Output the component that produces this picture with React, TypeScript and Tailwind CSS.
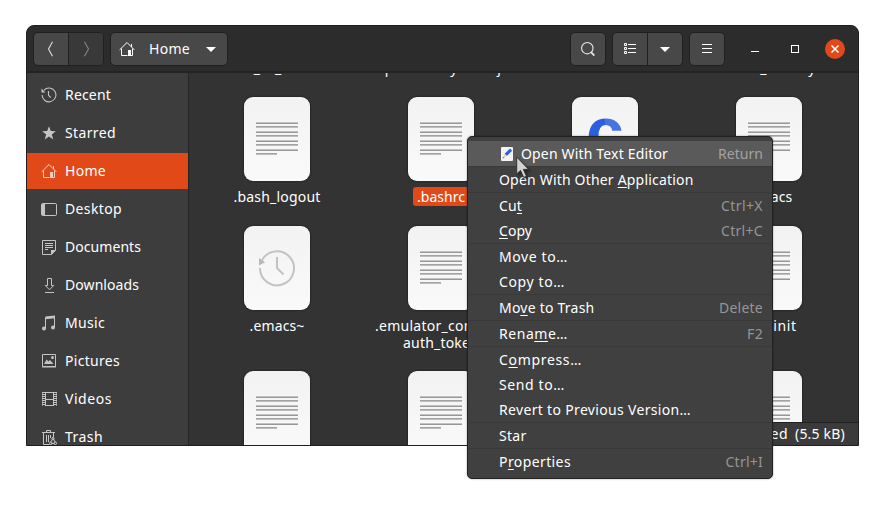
import { useLayoutEffect, useRef, useState, type ReactNode } from "react";

/** Text tracked so that it fills the given advance width. */
function Fit({ w, children, className = "" }: { w: number; children: ReactNode; className?: string }) {
  const ref = useRef<HTMLSpanElement>(null);
  const [spacing, setSpacing] = useState(0);
  useLayoutEffect(() => {
    const el = ref.current;
    if (!el) return;
    el.style.letterSpacing = "0px";
    const natural = el.getBoundingClientRect().width;
    const count = (el.textContent ?? "").length;
    const next = (w - natural) / Math.max(count, 1);
    el.style.letterSpacing = `${next}px`;
    setSpacing(next);
  }, [w]);
  return (
    <span ref={ref} className={`inline-block whitespace-pre ${className}`} style={{ letterSpacing: spacing }}>
      {children}
    </span>
  );
}

function HomeIcon() {
  return (
    <svg width="16" height="16" viewBox="0 0 16 16" fill="none" stroke="currentColor" strokeWidth="1">
      <path d="M.6 8.9 8 1.5l7.4 7.4M2.5 7.5v7h6M13.5 7.5v7h-1.5" />
      <path d="M12.5 3v3" />
      <path d="M9 9h3v6H9z" fill="currentColor" stroke="none" />
    </svg>
  );
}

function RecentIcon() {
  return (
    <svg width="16" height="16" viewBox="0 0 16 16" fill="none" stroke="currentColor" strokeWidth="1.1">
      <path d="M2.9 3.3A6.9 6.9 0 1 1 1.1 8" />
      <path d="M7.5 4v4.3l2.2 2.2" />
      <path d="M.5 1.6v3.8h3.8z" fill="currentColor" stroke="none" />
    </svg>
  );
}

const sideIcons: Record<string, ReactNode> = {
  Recent: <RecentIcon />,
  Starred: (
    <svg width="16" height="16" viewBox="0 0 16 16" fill="currentColor">
      <path d="m8 1.2 1.8 4.9 5 .2-4 3.1 1.5 5L8 11.6l-4.3 2.8 1.5-5-4-3.1 5-.2z" />
    </svg>
  ),
  Home: <HomeIcon />,
  Desktop: (
    <svg width="16" height="16" viewBox="0 0 16 16" fill="none" stroke="currentColor">
      <rect x=".5" y="2.5" width="15" height="12" rx="1.2" />
      <path d="M1 3h3v11H1z" fill="currentColor" stroke="none" />
    </svg>
  ),
  Documents: (
    <svg width="16" height="16" viewBox="0 0 16 16" fill="none" stroke="currentColor">
      <path d="M1.5 1.5h13v10l-4 4h-9z" />
      <path d="M4 4.5h8M4 6.5h8M4 8.5h8M4 10.5h3" />
      <path d="M10 11h5l-5 5z" fill="currentColor" stroke="none" />
    </svg>
  ),
  Downloads: (
    <svg width="16" height="16" viewBox="0 0 16 16" fill="none" stroke="currentColor">
      <path d="M6.5 8.5v-7h4v7h2.2l-4.2 4.3-4.2-4.3zM4 15.5h9" />
    </svg>
  ),
  Music: (
    <svg width="16" height="16" viewBox="0 0 16 16" fill="none" stroke="currentColor">
      <path d="M4.5 13V2.5l9-1V12" />
      <path d="M4.5 1.6 14 .6v2.6l-9.5 1z" fill="currentColor" stroke="none" />
      <circle cx="3" cy="13.6" r="2" fill="currentColor" stroke="none" />
      <circle cx="12" cy="12.6" r="2" fill="currentColor" stroke="none" />
    </svg>
  ),
  Pictures: (
    <svg width="16" height="16" viewBox="0 0 16 16" fill="none" stroke="currentColor">
      <path d="M1.5 1.5h13v12h-13zM1 14h14" />
      <path d="m3 11 2.6-4.5 1.8 2L9 7l3.5 4z" fill="currentColor" stroke="none" />
      <circle cx="11.5" cy="4.5" r="1.5" fill="currentColor" stroke="none" />
    </svg>
  ),
  Videos: (
    <svg width="16" height="16" viewBox="0 0 16 16" fill="none" stroke="currentColor">
      <path d="M4 1.5h8M4 8.5h8M4 14.5h8M4.5 1v14M12.5 1v14" />
      <path d="M2.5 1v14M14.5 1v14" strokeWidth="3" strokeDasharray="1 1" />
      <path d="M1.5 1v14M15.5 1v14" strokeOpacity=".6" />
    </svg>
  ),
  Trash: (
    <svg width="16" height="16" viewBox="0 0 16 16" fill="none" stroke="currentColor">
      <path d="M5.5 3V1.5h4V3M1 3.5h13M2.5 3.5v12h6M12.5 3.5V8" />
      <path d="M5.5 6v7M7.5 6v7M9.5 6v3" />
      <path d="m12 9.5-2.5 4M12 9.5l2.5 4M10.5 14.5h3" />
      <circle cx="12" cy="9.6" r="1.2" />
      <circle cx="9.8" cy="14.3" r="1.3" />
      <circle cx="14.3" cy="14.3" r="1.3" />
    </svg>
  ),
};

const places: [string, number][] = [
  ["Recent", 46], ["Starred", 51], ["Home", 41], ["Desktop", 57], ["Documents", 76],
  ["Downloads", 74], ["Music", 40], ["Pictures", 55], ["Videos", 47], ["Trash", 38],
];

function Caret() {
  return (
    <svg width="10" height="5" viewBox="0 0 10 5" fill="#fff">
      <path d="M0 0h10L5 5z" />
    </svg>
  );
}

const pill = "flex h-[34px] shrink-0 overflow-hidden rounded-[5px] border border-[#202020] bg-[#484848]";

function HeaderBar() {
  return (
    <div className="flex h-[47px] shrink-0 items-center border-b-2 border-[#232323] bg-[#2c2c2c] pl-1.5 pr-[13px] pt-px text-white">
      <div className={`${pill} w-[71px]`}>
        <div className="flex w-[35px] items-center justify-center border-r border-[#202020] pr-0.5">
          <svg width="7" height="16" viewBox="0 0 7 16" fill="none" stroke="#ddd" strokeWidth="1.1"><path d="M5.5.8 1.5 8l4 7.2" /></svg>
        </div>
        <div className="flex flex-1 items-center justify-center bg-[#393939]">
          <svg width="7" height="16" viewBox="0 0 7 16" fill="none" stroke="#868686" strokeWidth="1.1"><path d="M1.5.8l4 7.2-4 7.2" /></svg>
        </div>
      </div>
      <div className={`${pill} ml-1.5 w-[118px] items-center pl-2`}>
        <HomeIcon />
        <Fit w={41} className="ml-[14px]">Home</Fit>
        <span className="ml-4"><Caret /></span>
      </div>
      <div className="flex-1" />
      <div className={`${pill} w-9 items-center justify-center`}>
        <svg width="16" height="16" viewBox="0 0 16 16" fill="none" stroke="#e8e8e8" strokeWidth="1.1">
          <circle cx="7.3" cy="7.2" r="5.7" /><path d="m11 11 3.3 3.6" strokeWidth="1.8" />
        </svg>
      </div>
      <div className={`${pill} ml-1.5 w-[71px]`}>
        <div className="flex w-[35px] items-center justify-center border-r border-[#202020]">
          <svg width="12" height="12" viewBox="0 0 12 12" fill="none" stroke="#fff">
            <path d="M.5.5h2v2h-2zM.5 4.5h2v2h-2zM.5 8.5h2v2h-2zM4 1.5h8M4 5.5h8M4 9.5h8" />
          </svg>
        </div>
        <div className="flex flex-1 items-center justify-center"><Caret /></div>
      </div>
      <div className={`${pill} ml-1.5 w-9 items-center justify-center`}>
        <svg width="10" height="10" viewBox="0 0 10 10" stroke="#fff"><path d="M0 .5h10M0 4.5h10M0 8.5h10" /></svg>
      </div>
      <div className="ml-[26px] mt-1 h-px w-2 bg-white" />
      <div className="ml-8 size-2 border border-white" />
      <div className="ml-[26px] flex size-5 items-center justify-center rounded-full bg-[#e2491a]">
        <svg width="8" height="8" viewBox="0 0 8 8" stroke="#fff" strokeWidth="1.5"><path d="m.5.5 7 7M7.5.5l-7 7" /></svg>
      </div>
    </div>
  );
}

function Sidebar() {
  return (
    <div className="flex w-[162px] shrink-0 flex-col gap-0.5 overflow-hidden border-r border-[#252525] bg-[#3d3d3d] pt-1 text-white">
      {places.map(([name, w]) => (
        <div
          key={name}
          className={`flex h-9 shrink-0 items-center gap-2 pl-[14px] ${name === "Home" ? "bg-[#e14a18]" : ""}`}
        >
          <span className={name === "Home" ? "text-[#f8cdbd]" : "text-[#c4c4c4]"}>{sideIcons[name]}</span>
          <Fit w={w}>{name}</Fit>
        </div>
      ))}
    </div>
  );
}

type Kind = "text" | "clock" | "c";
type FileItem = { kind: Kind; lines: [string, number][]; selected?: boolean };

const textRows = [0, 1, 2, 3, 4, 5, 6, 7];

function FileIcon({ kind }: { kind: Kind }) {
  return (
    <div className="flex h-[84px] w-[66px] shrink-0 items-center justify-center rounded-[9px] bg-linear-to-b from-[#f2f2f2] to-[#fafafa] shadow-[0_0_2px_#111]">
      {kind === "text" && (
        <svg width="66" height="84" viewBox="0 0 66 84">
          {textRows.map((i) => {
            const y = 25 + Math.round(i * 4.48);
            const w = i === 7 ? 21 : 42;
            return (
              <g key={i}>
                <rect x="12" y={y} width={w} height="1" fill={i % 2 ? "#a2a2a2" : "#c2c2c2"} />
                <rect x="12" y={y + 1} width={w} height="1" fill={i % 2 ? "#bdbdbd" : "#989898"} />
              </g>
            );
          })}
        </svg>
      )}
      {kind === "clock" && (
        <svg width="38" height="38" viewBox="0 0 38 38" fill="none" stroke="#c2c2c2" strokeWidth="2">
          <path d="M3.2 13A17 17 0 1 1 2 19" />
          <path d="M19 8v11l6.5 6.5" />
          <path d="M1 9v7.5l6-3.2z" fill="#b8b8b8" stroke="none" />
        </svg>
      )}
      {kind === "c" && (
        <span className="-mt-4 bg-linear-to-r from-[#2c5fdd] from-50% to-[#4672e2] to-50% bg-clip-text font-['Liberation_Sans',sans-serif] text-[68px] font-bold leading-[84px] text-transparent">
          c
        </span>
      )}
    </div>
  );
}

const fileRows: { height: string; items: FileItem[] }[] = [
  {
    height: "h-[129px]",
    items: [
      { kind: "text", lines: [[".bash_logout", 87]] },
      { kind: "text", lines: [[".bashrc", 48]], selected: true },
      { kind: "c", lines: [] },
      { kind: "text", lines: [[".emacs", 47]] },
    ],
  },
  {
    height: "h-[145px]",
    items: [
      { kind: "clock", lines: [[".emacs~", 55]] },
      { kind: "text", lines: [[".emulator_console_", 132], ["auth_token", 76]] },
      { kind: "text", lines: [] },
      { kind: "text", lines: [[".gdbinit", 55]] },
    ],
  },
  {
    height: "h-[129px]",
    items: [
      { kind: "text", lines: [] },
      { kind: "text", lines: [] },
      { kind: "text", lines: [] },
      { kind: "text", lines: [] },
    ],
  },
];

function Files() {
  return (
    <div className="relative min-w-0 flex-1 overflow-hidden bg-[#333]">
      <div className="-mt-[14px] flex h-[38px] items-start pl-1.5 leading-[17px] text-white">
        <div className="flex w-[164px] justify-center"><Fit w={78}>.ar_an_arena</Fit></div>
        <div className="flex w-[164px] justify-center"><Fit w={120}>.pam-envsy.comaj</Fit></div>
        <div className="w-[164px]" />
        <div className="flex w-[164px] justify-center"><Fit w={94}>.bash_history</Fit></div>
      </div>
      {fileRows.map((row, r) => (
        <div key={r} className={`flex pl-1.5 ${row.height}`}>
          {row.items.map((f, i) => (
            <div key={i} className="flex w-[164px] shrink-0 flex-col items-center">
              <FileIcon kind={f.kind} />
              <div
                className={`mt-1.5 flex flex-col items-center rounded-[3px] px-1 py-px leading-[17px] text-white ${
                  f.selected ? "bg-[#e14a18]" : ""
                }`}
              >
                {f.lines.map(([t, w]) => (
                  <Fit key={t} w={w}>{t}</Fit>
                ))}
              </div>
            </div>
          ))}
        </div>
      ))}
      <div className="absolute bottom-0 right-0 flex h-[23px] w-[220px] items-center justify-end border-l border-t border-[#202020] bg-[#3b3b3b] pr-[13px] text-white">
        <Fit w={125}>“.bashrc” selected</Fit>
        <Fit w={50} className="ml-[7px]">(5.5 kB)</Fit>
      </div>
    </div>
  );
}

/** An underscore marks the mnemonic letter that follows it. */
type Entry = { label: string; w: number; keys?: string; kw?: number; icon?: boolean };

const groups: Entry[][] = [
  [{ label: "Open With Text Editor", w: 147, keys: "Return", kw: 45, icon: true }],
  [{ label: "Open With Other _Application", w: 194.5 }],
  [
    { label: "Cu_t", w: 23, keys: "Ctrl+X", kw: 42 },
    { label: "_Copy", w: 33, keys: "Ctrl+C", kw: 42 },
  ],
  [{ label: "Move to…", w: 69 }, { label: "Copy to…", w: 66 }],
  [{ label: "Mo_ve to Trash", w: 95.5, keys: "Delete", kw: 44 }],
  [{ label: "Rena_me…", w: 69, keys: "F2", kw: 16 }],
  [
    { label: "C_ompress…", w: 83 },
    { label: "Send to…", w: 66 },
    { label: "Revert to Previous Version…", w: 192 },
  ],
  [{ label: "Star", w: 27.5 }],
  [{ label: "P_roperties", w: 72, keys: "Ctrl+I", kw: 37.5 }],
];

function Mnemonic({ text }: { text: string }) {
  const at = text.indexOf("_");
  if (at < 0) return <>{text}</>;
  return (
    <>
      {text.slice(0, at)}
      <span className="underline decoration-1 underline-offset-2">{text[at + 1]}</span>
      {text.slice(at + 2)}
    </>
  );
}

function ContextMenu() {
  return (
    <div className="absolute left-[467px] top-[136px] h-[343px] w-[306px] overflow-hidden rounded-[5px] border border-[#222] bg-[#404040] pt-1 text-white shadow-[0_0_2px_rgba(0,0,0,0.4)]">
      {groups.map((g, i) => (
        <div key={i} className={i ? "border-t border-[#393939]" : ""}>
          {g.map((e) => (
            <div
              key={e.label}
              className={`flex h-[25px] items-center justify-between pr-[9px] ${e.icon ? "bg-[#5a5a5a] pl-8" : "pl-[31px]"}`}
            >
              <span className="flex items-center">
                {e.icon && (
                  <svg width="14" height="16" viewBox="0 0 14 16" className="mr-[7px]">
                    <rect x="1" y="1" width="12" height="14" rx="1" fill="#f4f4f4" />
                    <path d="m4.6 7.8 5.4-5.2 2.2 2.2L6.8 10z" fill="#2c62d9" />
                    <path d="m4.6 7.8 2.2 2.2-3.4 1.2z" fill="#f1d5b4" />
                    <path d="m2.5 12 1.6-1.6.5.5L3 12.4z" fill="#555" />
                  </svg>
                )}
                <Fit w={e.w}><Mnemonic text={e.label} /></Fit>
              </span>
              {e.keys && <Fit w={e.kw ?? 40} className={e.icon ? "text-[#a3a3a3]" : "text-[#969696]"}>{e.keys}</Fit>}
            </div>
          ))}
        </div>
      ))}
    </div>
  );
}

function Pointer() {
  return (
    <svg className="absolute left-[516px] top-[156px] drop-shadow-[2px_2px_1px_rgba(0,0,0,0.4)]" width="14" height="24" viewBox="0 0 14 24">
      <path d="M.7 1v17l3.8-3.6 3.2 7.1 2.8-1.2-3.1-6.9h5.3z" fill="#d2d2d2" stroke="#333" />
    </svg>
  );
}

export default function App() {
  return (
    <div className="relative h-[505px] w-[884px] overflow-hidden bg-white pl-[26px] pt-[25px] font-['Noto_Sans','Open_Sans',sans-serif] text-[14px] leading-5">
      <div className="flex h-[421px] w-[833px] flex-col overflow-hidden rounded-t-[8px] border border-[#1f1f1f] bg-[#2c2c2c]">
        <HeaderBar />
        <div className="flex min-h-0 flex-1">
          <Sidebar />
          <Files />
        </div>
      </div>
      <ContextMenu />
      <Pointer />
    </div>
  );
}
